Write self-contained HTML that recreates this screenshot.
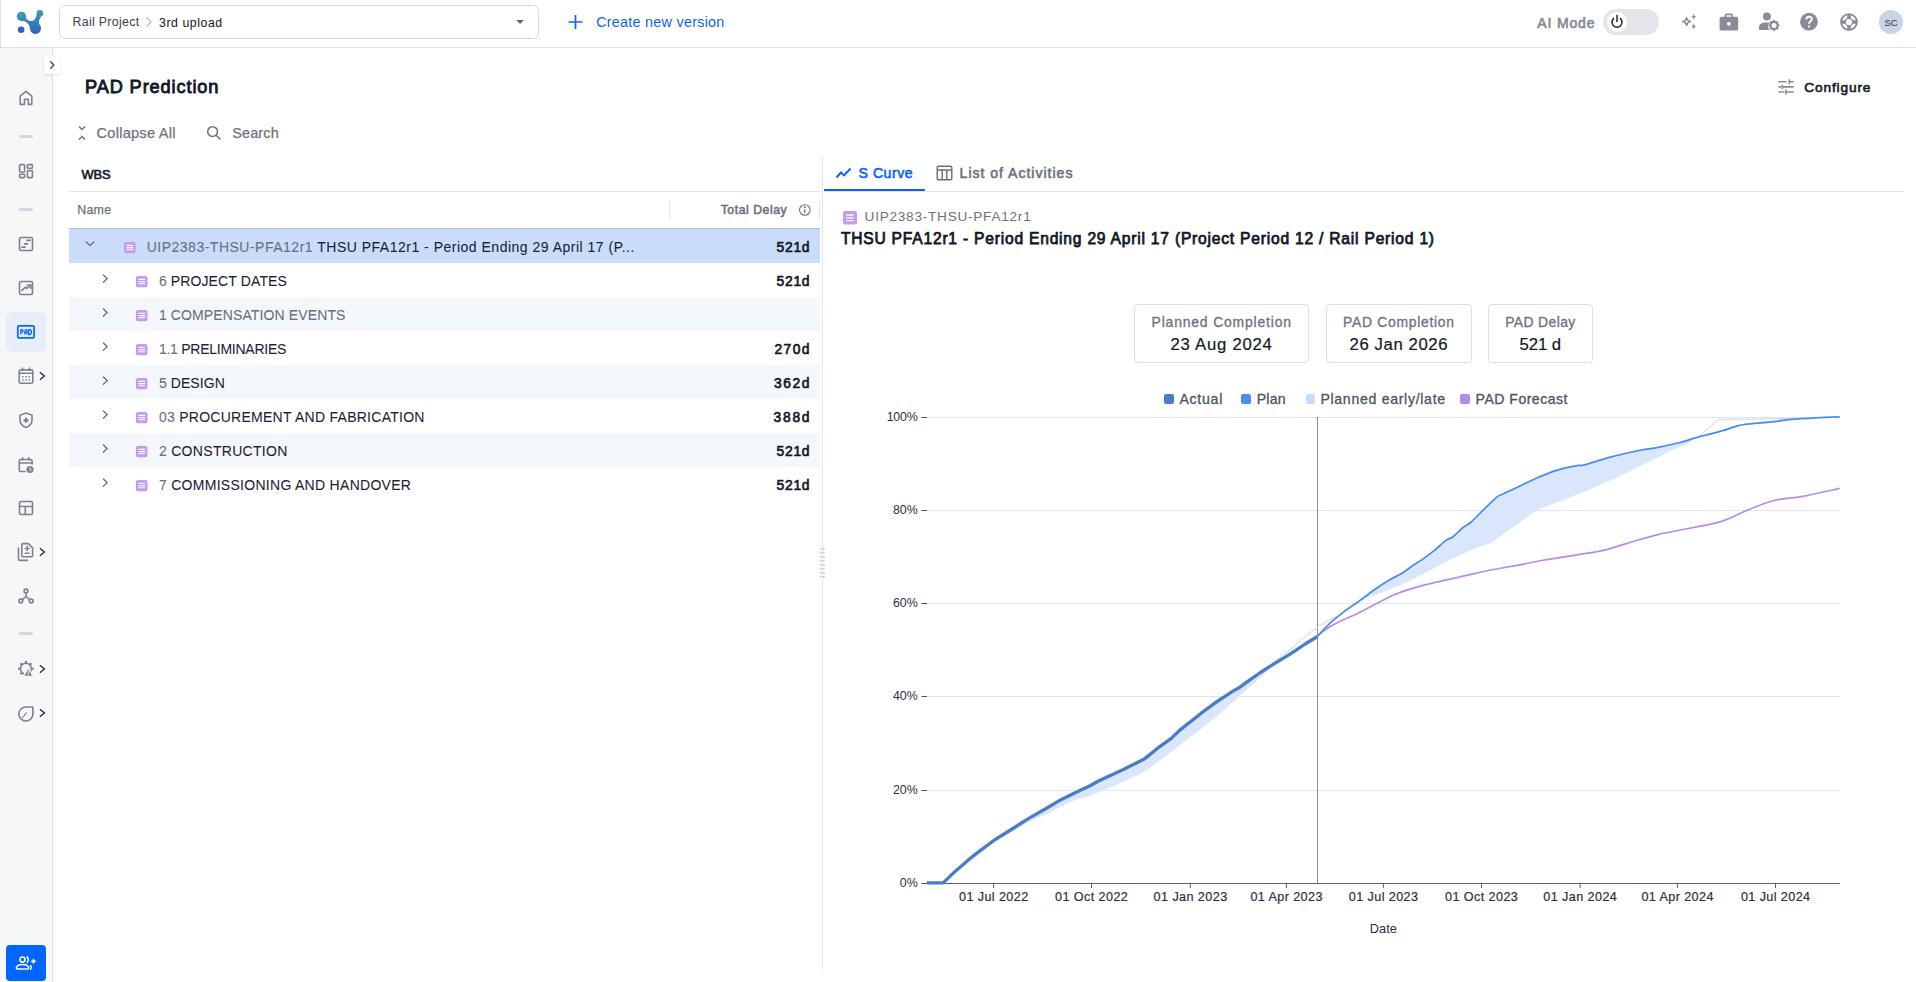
<!DOCTYPE html>
<html><head><meta charset="utf-8">
<style>
*{box-sizing:border-box;margin:0;padding:0}
html,body{width:1916px;height:982px;overflow:hidden;background:#fff;font-family:"Liberation Sans",sans-serif;color:#111827}
.a{position:absolute}
.t{position:absolute;white-space:nowrap;line-height:1}
svg.a{overflow:visible}
</style></head><body>
<div class="a" style="left:0;top:0;width:1916px;height:48px;background:#fff;border-bottom:1px solid #dfe3e8"></div>
<div class="a" style="left:0;top:0;width:1px;height:48px;background:#dfe3e8"></div>
<svg class="a" style="left:0;top:0" width="60" height="48" viewBox="0 0 60 48">
<defs><linearGradient id="lg" gradientUnits="userSpaceOnUse" x1="30" y1="10" x2="33" y2="34"><stop offset="0" stop-color="#3ba2a7"/><stop offset="1" stop-color="#2d63c3"/></linearGradient></defs>
<g fill="url(#lg)">
<circle cx="21.4" cy="16.3" r="4.6"/>
<circle cx="39.9" cy="13.2" r="3.3"/>
<circle cx="35.5" cy="28.4" r="5.5"/>
<path d="M25.6,17.2 C27.2,20.2 29.3,21.2 31.3,21.1 C33.8,21 36,18.6 36.8,14.2 L42.6,14.8 C40.6,17.2 38.7,19.8 38.9,22.5 C39.1,24.8 40.4,26.5 41,28.5 L30,28.5 C29.8,25.8 28,23 25,21.5 C23.2,20.8 20.4,20.9 20.4,20.9 Z"/>
</g>
<circle cx="21.1" cy="29.7" r="3.3" fill="#2e63c1"/>
</svg>
<div class="a" style="left:59px;top:5px;width:480px;height:34px;border:1px solid #d5d9de;border-radius:6px"></div>
<div class="t" style="left:72.5px;top:16.0px;font-size:12.3px;font-weight:400;color:#374151;letter-spacing:0.34px;">Rail Project</div>
<svg class="a" style="left:145px;top:16px" width="8" height="12" viewBox="0 0 8 12"><path d="M1.5,1.5 L6,6 L1.5,10.5" fill="none" stroke="#b8bcc3" stroke-width="1.3"/></svg>
<div class="t" style="left:159.0px;top:16.5px;font-size:12.3px;font-weight:400;color:#111827;letter-spacing:0.56px;">3rd upload</div>
<svg class="a" style="left:514px;top:19px" width="12" height="8" viewBox="0 0 12 8"><path d="M2.2,1.1 L9.9,1.1 L6.05,5 Z" fill="#5f6672"/></svg>
<svg class="a" style="left:568px;top:15px" width="15" height="15" viewBox="0 0 15 15"><path d="M7.5,0 V14 M0.5,7 H14.5" stroke="#0b63f6" stroke-width="1.7"/></svg>
<div class="t" style="left:596.2px;top:15.0px;font-size:14.3px;font-weight:400;color:#0b63f6;letter-spacing:0.29px;">Create new version</div>
<div class="t" style="left:1537.3px;top:15.7px;font-size:14px;font-weight:400;color:#868b95;letter-spacing:0.83px;-webkit-text-stroke:0.65px #868b95">AI Mode</div>
<div class="a" style="left:1603px;top:9px;width:56px;height:26px;border-radius:13px;background:#e3e5ea"></div>
<div class="a" style="left:1607px;top:12px;width:20px;height:20px;border-radius:10px;background:#fff"></div>
<svg class="a" style="left:1607px;top:12px" width="20" height="20" viewBox="0 0 20 20"><path d="M6.6,6.6 A5,5 0 1 0 13.4,6.6" fill="none" stroke="#1f2328" stroke-width="1.5" stroke-linecap="round"/><path d="M10,3.5 V9.5" stroke="#1f2328" stroke-width="1.5" stroke-linecap="round"/></svg>
<svg class="a" style="left:1678px;top:12px" width="20" height="20" viewBox="0 0 20 20">
<path d="M8.6,5.8 Q9.3,9 12.5,9.6 Q9.3,10.2 8.6,13.4 Q7.9,10.2 4.7,9.6 Q7.9,9 8.6,5.8 Z" fill="none" stroke="#878c96" stroke-width="1.5" stroke-linejoin="round"/>
<path d="M15.7,1.8 Q16,4.4 18.2,4.8 Q16,5.2 15.7,7.8 Q15.4,5.2 13.2,4.8 Q15.4,4.4 15.7,1.8Z" fill="#878c96"/>
<path d="M15.7,11.6 Q16,14.2 18.2,14.6 Q16,15 15.7,17.6 Q15.4,15 13.2,14.6 Q15.4,14.2 15.7,11.6Z" fill="#878c96"/>
</svg>
<svg class="a" style="left:1719px;top:12px" width="20" height="20" viewBox="0 0 20 20">
<path d="M6.4,5.5 V3.6 Q6.4,2.3 7.7,2.3 H11.9 Q13.2,2.3 13.2,3.6 V5.5" fill="none" stroke="#878c96" stroke-width="1.7"/>
<rect x="0.6" y="4.8" width="18.6" height="13.8" rx="1.6" fill="#878c96"/>
<circle cx="9.8" cy="11.8" r="1.9" fill="#fff"/>
</svg>
<svg class="a" style="left:1758px;top:11px" width="24" height="22" viewBox="0 0 24 22">
<circle cx="8.9" cy="5.5" r="4" fill="#878c96"/>
<path d="M1,19 V16.5 Q1,11.8 6.5,11.5 H11.5 Q9.8,13.5 10.2,16 Q10.4,18 11.5,19 Z" fill="#878c96"/>
<g transform="translate(16,14.4)"><circle r="3.6" fill="none" stroke="#878c96" stroke-width="2.2"/>
<g stroke="#878c96" stroke-width="2" stroke-linecap="butt"><path d="M0,-5.4 V-3.6 M0,5.4 V3.6 M-5.4,0 H-3.6 M5.4,0 H3.6 M-3.8,-3.8 L-2.6,-2.6 M3.8,3.8 L2.6,2.6 M-3.8,3.8 L-2.6,2.6 M3.8,-3.8 L2.6,-2.6"/></g></g>
</svg>
<svg class="a" style="left:1799px;top:12px" width="20" height="20" viewBox="0 0 20 20">
<circle cx="10" cy="9.7" r="8.9" fill="#878c96"/>
<path d="M7.3,7.6 Q7.3,4.8 10,4.8 Q12.8,4.8 12.8,7.3 Q12.8,8.8 11.2,9.6 Q10,10.2 10,11.8" fill="none" stroke="#fff" stroke-width="1.9"/>
<circle cx="10" cy="14.6" r="1.1" fill="#fff"/>
</svg>
<svg class="a" style="left:1839px;top:12px" width="20" height="20" viewBox="0 0 20 20">
<circle cx="10" cy="10" r="7.9" fill="none" stroke="#878c96" stroke-width="1.9"/>
<circle cx="10" cy="10" r="3.75" fill="none" stroke="#878c96" stroke-width="1.3"/>
<path d="M10,2 V6.5 M10,13.5 V18 M2,10 H6.5 M13.5,10 H18" stroke="#878c96" stroke-width="3.6"/>
</svg>
<div class="a" style="left:1879px;top:10px;width:24px;height:24px;border-radius:12px;background:#c9d5e4"></div>
<div class="t" style="left:1591.0px;width:600px;text-align:center;top:18.0px;font-size:9.5px;font-weight:400;color:#2b3445;">SC</div>
<div class="a" style="left:0;top:48px;width:53px;height:934px;background:#f6f7f9;border-right:1px solid #dcdfe3"></div>
<div class="a" style="left:44px;top:56px;width:16px;height:18px;background:#fff;border-radius:3px;box-shadow:0 1px 3px rgba(0,0,0,0.12)"></div>
<svg class="a" style="left:48px;top:60px" width="8" height="10" viewBox="0 0 8 10"><path d="M2.3,1.3 L5.9,5 L2.3,8.7" fill="none" stroke="#3b4556" stroke-width="1.3"/></svg>
<svg class="a" style="left:16px;top:88px" width="20" height="20" viewBox="0 0 20 20" fill="none" stroke="#7d828c" stroke-width="1.6" stroke-linecap="round" stroke-linejoin="round"><path d="M4.2,16.4 V8.2 L10,3.3 L15.8,8.2 V16.4 H12.3 V11.3 H8.5 V16.4 Z"/></svg>
<div class="a" style="left:19px;top:135px;width:14px;height:3px;border-radius:2px;background:#d3d7dd"></div>
<svg class="a" style="left:16px;top:161px" width="20" height="20" viewBox="0 0 20 20" fill="none" stroke="#7d828c" stroke-width="1.6" stroke-linecap="round" stroke-linejoin="round"><rect x="3.6" y="3.6" width="5" height="7.4" rx="0.8"/><rect x="11.4" y="3.6" width="5" height="3.6" rx="0.8"/><rect x="3.6" y="13.2" width="5" height="3.4" rx="0.8"/><rect x="11.4" y="9.6" width="5" height="7" rx="0.8"/></svg>
<div class="a" style="left:19px;top:208px;width:14px;height:3px;border-radius:2px;background:#d3d7dd"></div>
<svg class="a" style="left:16px;top:234px" width="20" height="20" viewBox="0 0 20 20" fill="none" stroke="#7d828c" stroke-width="1.6" stroke-linecap="round" stroke-linejoin="round"><rect x="3.5" y="3.5" width="13" height="13" rx="1.5"/><path d="M10.8,6.4 H14.3 M8.4,9.9 H11.7 M5.8,13.1 H9.3"/></svg>
<svg class="a" style="left:16px;top:278px" width="20" height="20" viewBox="0 0 20 20" fill="none" stroke="#7d828c" stroke-width="1.6" stroke-linecap="round" stroke-linejoin="round"><rect x="3.5" y="3.5" width="13" height="13" rx="1.5"/><path d="M5.8,12.3 L9.7,9.1 L10.9,10.5 L14.2,7.6 M11.4,7 H14.8 V10.4"/></svg>
<div class="a" style="left:6px;top:312px;width:40px;height:40px;border-radius:6px;background:#e6edf9"></div>
<svg class="a" style="left:16px;top:322px" width="20" height="20" viewBox="0 0 20 20">
<rect x="1.8" y="3.9" width="16.3" height="12" rx="1.4" fill="none" stroke="#0a66fa" stroke-width="1.75"/>
<g fill="none" stroke="#0a66fa" stroke-width="1.3" stroke-linejoin="round"><path d="M4.8,12.5 V7.7 H5.9 Q7.1,7.7 7.1,8.9 Q7.1,10.1 5.9,10.1 H4.8"/><path d="M8.6,12.5 L9.1,8.6 Q9.3,7.7 10,7.7 Q10.9,7.7 11,8.6 V12.5 M8.9,10.6 H11"/><path d="M12.7,7.7 H13.9 Q15.4,7.7 15.4,10.1 Q15.4,12.5 13.9,12.5 H12.7 Z"/></g>
</svg>
<svg class="a" style="left:16px;top:366px" width="20" height="20" viewBox="0 0 20 20" fill="none" stroke="#7d828c" stroke-width="1.6" stroke-linecap="round" stroke-linejoin="round"><rect x="3.2" y="3.9" width="13.6" height="13.3" rx="1.5"/><path d="M3.2,7.2 H16.8 M6.5,2 V4.2 M13.5,2 V4.2"/><g stroke-width="1.4"><path d="M6.6,10.8 H7.1 M9.8,10.8 H10.3 M13,10.8 H13.5 M6.6,14 H7.1 M9.8,14 H10.3 M13,14 H13.5"/></g></svg>
<svg class="a" style="left:38px;top:371px" width="8" height="10" viewBox="0 0 8 10"><path d="M1.9,1.3 L6.4,5 L1.9,8.7" fill="none" stroke="#1f2937" stroke-width="1.3"/></svg>
<svg class="a" style="left:16px;top:410px" width="20" height="20" viewBox="0 0 20 20" fill="none" stroke="#7d828c" stroke-width="1.6" stroke-linecap="round" stroke-linejoin="round"><path d="M10,3 L16,5.2 V10 Q16,15 10,17.5 Q4,15 4,10 V5.2 Z"/><path d="M10,7.8 V12.8 M7.5,10.3 H12.5" stroke-width="2.3" stroke-linecap="butt"/></svg>
<svg class="a" style="left:16px;top:455px" width="20" height="20" viewBox="0 0 20 20" fill="none" stroke="#7d828c" stroke-width="1.6" stroke-linecap="round" stroke-linejoin="round"><path d="M9,16.5 H4.8 Q3.3,16.5 3.3,15 V6 Q3.3,4.5 4.8,4.5 H14.6 Q16.1,4.5 16.1,6 V9"/><path d="M3.3,8 H16.1 M6.6,2.8 V5 M12.8,2.8 V5"/><circle cx="14" cy="14.5" r="3.6" fill="#7d828c" stroke="none"/><path d="M14,12.8 V14.6 L15.2,15.4" stroke="#f6f7f9" stroke-width="1"/></svg>
<svg class="a" style="left:16px;top:498px" width="20" height="20" viewBox="0 0 20 20" fill="none" stroke="#7d828c" stroke-width="1.6" stroke-linecap="round" stroke-linejoin="round"><rect x="3.5" y="3.5" width="13" height="13" rx="1.5"/><path d="M3.5,8.5 H16.5 M9.3,8.5 V16.5"/></svg>
<svg class="a" style="left:16px;top:542px" width="20" height="20" viewBox="0 0 20 20" fill="none" stroke="#7d828c" stroke-width="1.6" stroke-linecap="round" stroke-linejoin="round"><path d="M7,1.6 H12.3 L16.6,5.9 V13.4 Q16.6,14.8 15.2,14.8 H7 Q5.8,14.8 5.8,13.4 V3 Q5.8,1.6 7,1.6 Z"/><path d="M2.5,6 V17.2 Q2.5,18.4 3.7,18.4 H11.6"/><path d="M11.2,4.6 V8.4 M9.3,6.5 H13.1 M9.3,11.3 H13.1"/></svg>
<svg class="a" style="left:38px;top:547px" width="8" height="10" viewBox="0 0 8 10"><path d="M1.9,1.3 L6.4,5 L1.9,8.7" fill="none" stroke="#1f2937" stroke-width="1.3"/></svg>
<svg class="a" style="left:16px;top:586px" width="20" height="20" viewBox="0 0 20 20" fill="none" stroke="#7d828c" stroke-width="1.6" stroke-linecap="round" stroke-linejoin="round"><circle cx="10" cy="5" r="1.9"/><circle cx="4.8" cy="15" r="1.9"/><circle cx="15.2" cy="15" r="1.9"/><path d="M10,7 V10.5 L6.3,13.6 M10,10.5 L13.7,13.6"/></svg>
<div class="a" style="left:19px;top:632px;width:14px;height:3px;border-radius:2px;background:#d3d7dd"></div>
<svg class="a" style="left:16px;top:659px" width="20" height="20" viewBox="0 0 20 20" fill="none" stroke="#7d828c" stroke-width="1.6" stroke-linecap="round" stroke-linejoin="round"><circle cx="9.9" cy="9.7" r="5.5"/><rect x="15.50" y="8.60" width="2.2" height="2.2" transform="rotate(0 16.60 9.70)" fill="#7d828c" stroke="none"/><rect x="13.54" y="13.34" width="2.2" height="2.2" transform="rotate(45 14.64 14.44)" fill="#7d828c" stroke="none"/><rect x="8.80" y="15.30" width="2.2" height="2.2" transform="rotate(90 9.90 16.40)" fill="#7d828c" stroke="none"/><rect x="4.06" y="13.34" width="2.2" height="2.2" transform="rotate(135 5.16 14.44)" fill="#7d828c" stroke="none"/><rect x="2.10" y="8.60" width="2.2" height="2.2" transform="rotate(180 3.20 9.70)" fill="#7d828c" stroke="none"/><rect x="4.06" y="3.86" width="2.2" height="2.2" transform="rotate(225 5.16 4.96)" fill="#7d828c" stroke="none"/><rect x="8.80" y="1.90" width="2.2" height="2.2" transform="rotate(270 9.90 3.00)" fill="#7d828c" stroke="none"/><rect x="13.54" y="3.86" width="2.2" height="2.2" transform="rotate(315 14.64 4.96)" fill="#7d828c" stroke="none"/><path d="M12.3,8.6 L17.2,17.4 H7.4 Z" fill="#7d828c" stroke="#f6f7f9" stroke-width="1.2"/><path d="M12.3,12 V14.3 M12.3,15.6 V15.9" stroke="#f6f7f9" stroke-width="1"/></svg>
<svg class="a" style="left:38px;top:664px" width="8" height="10" viewBox="0 0 8 10"><path d="M1.9,1.3 L6.4,5 L1.9,8.7" fill="none" stroke="#1f2937" stroke-width="1.3"/></svg>
<svg class="a" style="left:16px;top:703px" width="20" height="20" viewBox="0 0 20 20" fill="none" stroke="#7d828c" stroke-width="1.6" stroke-linecap="round" stroke-linejoin="round"><path d="M16.9,4 V11 A7,7 0 1 1 9.9,4 Z"/><path d="M6.2,15 L10.5,9.8" stroke-width="1.1"/></svg>
<svg class="a" style="left:38px;top:708px" width="8" height="10" viewBox="0 0 8 10"><path d="M1.9,1.3 L6.4,5 L1.9,8.7" fill="none" stroke="#1f2937" stroke-width="1.3"/></svg>
<div class="a" style="left:6px;top:945px;width:40px;height:36px;border-radius:4px;background:#0066ff"></div>
<svg class="a" style="left:14px;top:954px" width="24" height="18" viewBox="0 0 24 18">
<circle cx="8.5" cy="5.6" r="2.55" fill="none" stroke="#fff" stroke-width="1.6"/>
<path d="M13.2,2.7 Q15.3,5.65 13.2,8.6 M16.6,11.5 Q18.1,13.4 16.6,15.3" fill="none" stroke="#fff" stroke-width="1.5" stroke-linecap="round"/>
<path d="M3.6,15 Q2.1,15 2.4,13.4 Q3.6,10.5 8.5,10.5 Q13.4,10.5 14.6,13.4 Q14.9,15 13.4,15 Z" fill="none" stroke="#fff" stroke-width="1.6"/>
<path d="M19.5,4.7 Q19.9,6.9 22.1,7.3 Q19.9,7.7 19.5,9.9 Q19.1,7.7 16.9,7.3 Q19.1,6.9 19.5,4.7 Z" fill="#fff" stroke="#fff" stroke-width="0.6" stroke-linejoin="round"/>
</svg>
<div class="t" style="left:85.0px;top:77.8px;font-size:18.2px;font-weight:400;color:#111827;letter-spacing:0.88px;-webkit-text-stroke:0.85px #111827">PAD Prediction</div>
<svg class="a" style="left:1777px;top:78px" width="18" height="18" viewBox="0 0 18 18" stroke="#878c96" stroke-width="1.6">
<path d="M1.4,3.8 H9.6 M12.3,3.8 H16.7 M1.4,8.9 H4 M5.3,8.9 H16.7 M1.4,14 H7.4 M8.9,14 H16.7"/>
<path d="M12.3,1.2 V6.2 M5.3,6.7 V11 M8.9,11.4 V16.5"/>
</svg>
<div class="t" style="left:1804.3px;top:80.7px;font-size:13.7px;font-weight:400;color:#111827;letter-spacing:0.85px;-webkit-text-stroke:0.6px #111827">Configure</div>
<svg class="a" style="left:77px;top:125px" width="10" height="16" viewBox="0 0 10 16" fill="none" stroke="#6b7280" stroke-width="1.4">
<path d="M2,1.5 L5,4.5 L8,1.5 M2,14.5 L5,11.5 L8,14.5"/>
</svg>
<div class="t" style="left:96.5px;top:125.9px;font-size:14.6px;font-weight:400;color:#6b7280;letter-spacing:0.25px;-webkit-text-stroke:0.25px #6b7280">Collapse All</div>
<svg class="a" style="left:206px;top:125px" width="16" height="16" viewBox="0 0 16 16" fill="none" stroke="#6b7280" stroke-width="1.5">
<circle cx="6.6" cy="6.6" r="4.9"/><path d="M10.2,10.2 L14.5,14.5"/>
</svg>
<div class="t" style="left:232.2px;top:126.1px;font-size:14.4px;font-weight:400;color:#6b7280;letter-spacing:0.19px;-webkit-text-stroke:0.25px #6b7280">Search</div>
<div class="t" style="left:81.5px;top:168.5px;font-size:12.9px;font-weight:400;color:#111827;letter-spacing:-0.11px;-webkit-text-stroke:0.6px #111827">WBS</div>
<div class="a" style="left:69px;top:191px;width:751px;height:1px;background:#e1e4e8"></div>
<div class="t" style="left:77.3px;top:203.5px;font-size:12.4px;font-weight:400;color:#6b7280;letter-spacing:0.23px;-webkit-text-stroke:0.25px #6b7280">Name</div>
<div class="a" style="left:669px;top:201px;width:1px;height:18px;background:#e3e5e8"></div>
<div class="a" style="left:819px;top:201px;width:1px;height:18px;background:#e3e5e8"></div>
<div class="t" style="right:1128.7px;top:203.9px;font-size:12.3px;font-weight:400;color:#6b7280;letter-spacing:0.53px;-webkit-text-stroke:0.55px #6b7280">Total Delay</div>
<svg class="a" style="left:798px;top:203px" width="14" height="14" viewBox="0 0 14 14" fill="none" stroke="#6b7280" stroke-width="1.1">
<circle cx="6.8" cy="7" r="5.3"/><path d="M6.8,6.2 V10" stroke-width="1.3"/><circle cx="6.8" cy="4.3" r="0.5" fill="#6b7280"/>
</svg>
<div class="a" style="left:69px;top:228px;width:751px;height:1px;background:#b9bdc3"></div>
<div class="a" style="left:69px;top:229px;width:751px;height:34px;background:#c9dcfa"></div>
<svg class="a" style="left:84px;top:240px" width="12" height="8" viewBox="0 0 12 8"><path d="M1.8,1.6 L6,5.6 L10.2,1.6" fill="none" stroke="#4b5563" stroke-width="1.1"/></svg>
<svg class="a" style="left:124.3px;top:241.6px" width="11.5" height="11.2" viewBox="0 0 11.5 11.2"><rect x="0" y="0" width="11.5" height="11.2" rx="1.8" fill="#c39bf0"/><path d="M2.3,3.4 H9.2 M2.3,5.6 H9.2 M2.3,7.8 H9.2" stroke="#fff" stroke-width="1.15"/></svg>
<div class="t" style="left:146.7px;top:240.4px;font-size:14.0px;color:#1a2233;letter-spacing:0.50px;-webkit-text-stroke:0.05px #1a2233"><span style="color:#6b7280">UIP2383-THSU-PFA12r1</span> THSU PFA12r1 - Period Ending 29 April 17 (P...</div>
<div class="t" style="right:1105.8px;top:240.8px;font-size:13.8px;font-weight:400;color:#111827;letter-spacing:0.73px;-webkit-text-stroke:0.65px #111827">521d</div>
<div class="a" style="left:69px;top:263px;width:751px;height:34px;background:#ffffff"></div>
<svg class="a" style="left:101px;top:273px" width="8" height="12" viewBox="0 0 8 12"><path d="M2,1.6 L6.2,5.6 L2,9.6" fill="none" stroke="#4b5563" stroke-width="1.1"/></svg>
<svg class="a" style="left:136.2px;top:275.6px" width="11.5" height="11.2" viewBox="0 0 11.5 11.2"><rect x="0" y="0" width="11.5" height="11.2" rx="1.8" fill="#c39bf0"/><path d="M2.3,3.4 H9.2 M2.3,5.6 H9.2 M2.3,7.8 H9.2" stroke="#fff" stroke-width="1.15"/></svg>
<div class="t" style="left:158.9px;top:274.4px;font-size:14.0px;color:#1a2233;letter-spacing:0.12px;-webkit-text-stroke:0.05px #1a2233"><span style="color:#6b7280">6</span> PROJECT DATES</div>
<div class="t" style="right:1105.8px;top:274.8px;font-size:13.8px;font-weight:400;color:#111827;letter-spacing:0.73px;-webkit-text-stroke:0.65px #111827">521d</div>
<div class="a" style="left:69px;top:297px;width:751px;height:34px;background:#f4f7fc"></div>
<svg class="a" style="left:101px;top:307px" width="8" height="12" viewBox="0 0 8 12"><path d="M2,1.6 L6.2,5.6 L2,9.6" fill="none" stroke="#4b5563" stroke-width="1.1"/></svg>
<svg class="a" style="left:136.2px;top:309.6px" width="11.5" height="11.2" viewBox="0 0 11.5 11.2"><rect x="0" y="0" width="11.5" height="11.2" rx="1.8" fill="#c39bf0"/><path d="M2.3,3.4 H9.2 M2.3,5.6 H9.2 M2.3,7.8 H9.2" stroke="#fff" stroke-width="1.15"/></svg>
<div class="t" style="left:158.9px;top:308.4px;font-size:14.0px;color:#1a2233;letter-spacing:0.12px;-webkit-text-stroke:0.05px #1a2233"><span style="color:#6b7280">1 COMPENSATION EVENTS</span></div>
<div class="a" style="left:69px;top:331px;width:751px;height:34px;background:#ffffff"></div>
<svg class="a" style="left:101px;top:341px" width="8" height="12" viewBox="0 0 8 12"><path d="M2,1.6 L6.2,5.6 L2,9.6" fill="none" stroke="#4b5563" stroke-width="1.1"/></svg>
<svg class="a" style="left:136.2px;top:343.6px" width="11.5" height="11.2" viewBox="0 0 11.5 11.2"><rect x="0" y="0" width="11.5" height="11.2" rx="1.8" fill="#c39bf0"/><path d="M2.3,3.4 H9.2 M2.3,5.6 H9.2 M2.3,7.8 H9.2" stroke="#fff" stroke-width="1.15"/></svg>
<div class="t" style="left:158.9px;top:342.4px;font-size:14.0px;color:#1a2233;letter-spacing:-0.25px;-webkit-text-stroke:0.05px #1a2233"><span style="color:#6b7280">1.1</span> PRELIMINARIES</div>
<div class="t" style="right:1105.1px;top:342.8px;font-size:13.8px;font-weight:400;color:#111827;letter-spacing:1.43px;-webkit-text-stroke:0.65px #111827">270d</div>
<div class="a" style="left:69px;top:365px;width:751px;height:34px;background:#f4f7fc"></div>
<svg class="a" style="left:101px;top:375px" width="8" height="12" viewBox="0 0 8 12"><path d="M2,1.6 L6.2,5.6 L2,9.6" fill="none" stroke="#4b5563" stroke-width="1.1"/></svg>
<svg class="a" style="left:136.2px;top:377.6px" width="11.5" height="11.2" viewBox="0 0 11.5 11.2"><rect x="0" y="0" width="11.5" height="11.2" rx="1.8" fill="#c39bf0"/><path d="M2.3,3.4 H9.2 M2.3,5.6 H9.2 M2.3,7.8 H9.2" stroke="#fff" stroke-width="1.15"/></svg>
<div class="t" style="left:158.9px;top:376.4px;font-size:14.0px;color:#1a2233;letter-spacing:0.07px;-webkit-text-stroke:0.05px #1a2233"><span style="color:#6b7280">5</span> DESIGN</div>
<div class="t" style="right:1104.9px;top:376.8px;font-size:13.8px;font-weight:400;color:#111827;letter-spacing:1.60px;-webkit-text-stroke:0.65px #111827">362d</div>
<div class="a" style="left:69px;top:399px;width:751px;height:34px;background:#ffffff"></div>
<svg class="a" style="left:101px;top:409px" width="8" height="12" viewBox="0 0 8 12"><path d="M2,1.6 L6.2,5.6 L2,9.6" fill="none" stroke="#4b5563" stroke-width="1.1"/></svg>
<svg class="a" style="left:136.2px;top:411.6px" width="11.5" height="11.2" viewBox="0 0 11.5 11.2"><rect x="0" y="0" width="11.5" height="11.2" rx="1.8" fill="#c39bf0"/><path d="M2.3,3.4 H9.2 M2.3,5.6 H9.2 M2.3,7.8 H9.2" stroke="#fff" stroke-width="1.15"/></svg>
<div class="t" style="left:158.9px;top:410.4px;font-size:14.0px;color:#1a2233;letter-spacing:0.27px;-webkit-text-stroke:0.05px #1a2233"><span style="color:#6b7280">03</span> PROCUREMENT AND FABRICATION</div>
<div class="t" style="right:1104.7px;top:410.8px;font-size:13.8px;font-weight:400;color:#111827;letter-spacing:1.77px;-webkit-text-stroke:0.65px #111827">388d</div>
<div class="a" style="left:69px;top:433px;width:751px;height:34px;background:#f4f7fc"></div>
<svg class="a" style="left:101px;top:443px" width="8" height="12" viewBox="0 0 8 12"><path d="M2,1.6 L6.2,5.6 L2,9.6" fill="none" stroke="#4b5563" stroke-width="1.1"/></svg>
<svg class="a" style="left:136.2px;top:445.6px" width="11.5" height="11.2" viewBox="0 0 11.5 11.2"><rect x="0" y="0" width="11.5" height="11.2" rx="1.8" fill="#c39bf0"/><path d="M2.3,3.4 H9.2 M2.3,5.6 H9.2 M2.3,7.8 H9.2" stroke="#fff" stroke-width="1.15"/></svg>
<div class="t" style="left:158.9px;top:444.4px;font-size:14.0px;color:#1a2233;letter-spacing:0.31px;-webkit-text-stroke:0.05px #1a2233"><span style="color:#6b7280">2</span> CONSTRUCTION</div>
<div class="t" style="right:1105.8px;top:444.8px;font-size:13.8px;font-weight:400;color:#111827;letter-spacing:0.73px;-webkit-text-stroke:0.65px #111827">521d</div>
<div class="a" style="left:69px;top:467px;width:751px;height:34px;background:#ffffff"></div>
<svg class="a" style="left:101px;top:477px" width="8" height="12" viewBox="0 0 8 12"><path d="M2,1.6 L6.2,5.6 L2,9.6" fill="none" stroke="#4b5563" stroke-width="1.1"/></svg>
<svg class="a" style="left:136.2px;top:479.6px" width="11.5" height="11.2" viewBox="0 0 11.5 11.2"><rect x="0" y="0" width="11.5" height="11.2" rx="1.8" fill="#c39bf0"/><path d="M2.3,3.4 H9.2 M2.3,5.6 H9.2 M2.3,7.8 H9.2" stroke="#fff" stroke-width="1.15"/></svg>
<div class="t" style="left:158.9px;top:478.4px;font-size:14.0px;color:#1a2233;letter-spacing:0.29px;-webkit-text-stroke:0.05px #1a2233"><span style="color:#6b7280">7</span> COMMISSIONING AND HANDOVER</div>
<div class="t" style="right:1105.8px;top:478.8px;font-size:13.8px;font-weight:400;color:#111827;letter-spacing:0.73px;-webkit-text-stroke:0.65px #111827">521d</div>
<div class="a" style="left:822px;top:156px;width:1px;height:813px;background:#e3e5e9"></div>
<svg class="a" style="left:820px;top:548px" width="6" height="32" viewBox="0 0 6 32" fill="#c4c7cc"><rect x="0" y="0" width="1.6" height="1.6"/><rect x="3" y="0" width="1.6" height="1.6"/><rect x="0" y="4" width="1.6" height="1.6"/><rect x="3" y="4" width="1.6" height="1.6"/><rect x="0" y="8" width="1.6" height="1.6"/><rect x="3" y="8" width="1.6" height="1.6"/><rect x="0" y="12" width="1.6" height="1.6"/><rect x="3" y="12" width="1.6" height="1.6"/><rect x="0" y="16" width="1.6" height="1.6"/><rect x="3" y="16" width="1.6" height="1.6"/><rect x="0" y="20" width="1.6" height="1.6"/><rect x="3" y="20" width="1.6" height="1.6"/><rect x="0" y="24" width="1.6" height="1.6"/><rect x="3" y="24" width="1.6" height="1.6"/><rect x="0" y="28" width="1.6" height="1.6"/><rect x="3" y="28" width="1.6" height="1.6"/></svg>
<svg class="a" style="left:835px;top:166px" width="17" height="13" viewBox="0 0 17 13"><path d="M1.5,11.5 L6,6.5 L9,9.5 L15.5,2.5" fill="none" stroke="#0b63f6" stroke-width="1.9" stroke-linejoin="miter"/></svg>
<div class="t" style="left:858.5px;top:166.1px;font-size:14.1px;font-weight:400;color:#0b63f6;letter-spacing:0.53px;-webkit-text-stroke:0.6px #0b63f6">S Curve</div>
<svg class="a" style="left:936px;top:165px" width="17" height="16" viewBox="0 0 17 16" fill="none" stroke="#6b7075" stroke-width="1.4"><rect x="1.2" y="1.2" width="14.6" height="13.6" rx="1.3"/><path d="M1.2,5 H15.8 M6.2,5 V14.8 M10.8,5 V14.8"/></svg>
<div class="t" style="left:959.6px;top:166.1px;font-size:14.1px;font-weight:400;color:#6b7280;letter-spacing:0.97px;-webkit-text-stroke:0.6px #6b7280">List of Activities</div>
<div class="a" style="left:824px;top:191px;width:1080px;height:1px;background:#e1e4e8"></div>
<div class="a" style="left:824px;top:189px;width:101px;height:2px;background:#0b63f6"></div>
<svg class="a" style="left:843px;top:211px" width="14" height="13.5" viewBox="0 0 14 13.5"><rect x="0" y="0" width="14" height="13.5" rx="2" fill="#c39bf0"/><path d="M3.3,4 H10.7 M3.3,6.8 H10.7 M3.3,9.6 H10.7" stroke="#fff" stroke-width="1.3"/></svg>
<div class="t" style="left:864.6px;top:210.2px;font-size:13.6px;font-weight:400;color:#6b7280;letter-spacing:0.75px;">UIP2383-THSU-PFA12r1</div>
<div class="t" style="left:840.9px;top:230.5px;font-size:15.6px;font-weight:400;color:#111827;letter-spacing:0.79px;-webkit-text-stroke:0.75px #111827">THSU PFA12r1 - Period Ending 29 April 17 (Project Period 12 / Rail Period 1)</div>
<div class="a" style="left:1134px;top:304px;width:174.5px;height:58.5px;border:1px solid #dcdfe4;border-radius:4px"></div>
<div class="t" style="left:921.7px;width:600px;text-align:center;top:315.8px;font-size:13.9px;font-weight:400;color:#6b7280;letter-spacing:0.84px;-webkit-text-stroke:0.3px #6b7280">Planned Completion</div>
<div class="t" style="left:921.6px;width:600px;text-align:center;top:336.8px;font-size:16.7px;font-weight:400;color:#111827;letter-spacing:0.75px;-webkit-text-stroke:0.2px #111827">23 Aug 2024</div>
<div class="a" style="left:1325.5px;top:304px;width:146px;height:58.5px;border:1px solid #dcdfe4;border-radius:4px"></div>
<div class="t" style="left:1098.9px;width:600px;text-align:center;top:315.8px;font-size:13.9px;font-weight:400;color:#6b7280;letter-spacing:0.71px;-webkit-text-stroke:0.3px #6b7280">PAD Completion</div>
<div class="t" style="left:1098.8px;width:600px;text-align:center;top:336.8px;font-size:16.7px;font-weight:400;color:#111827;letter-spacing:0.60px;-webkit-text-stroke:0.2px #111827">26 Jan 2026</div>
<div class="a" style="left:1488px;top:304px;width:104.5px;height:58.5px;border:1px solid #dcdfe4;border-radius:4px"></div>
<div class="t" style="left:1240.4px;width:600px;text-align:center;top:315.8px;font-size:13.9px;font-weight:400;color:#6b7280;letter-spacing:0.40px;-webkit-text-stroke:0.3px #6b7280">PAD Delay</div>
<div class="t" style="left:1240.2px;width:600px;text-align:center;top:336.8px;font-size:16.7px;font-weight:400;color:#111827;letter-spacing:-0.06px;-webkit-text-stroke:0.2px #111827">521 d</div>
<div class="a" style="left:1163.8px;top:394.2px;width:9.8px;height:9.8px;border-radius:2px;background:#4a7bc8"></div>
<div class="t" style="left:1179.4px;top:392.2px;font-size:14.1px;font-weight:400;color:#4b5563;letter-spacing:0.74px;-webkit-text-stroke:0.3px #4b5563">Actual</div>
<div class="a" style="left:1241.4px;top:394.2px;width:9.8px;height:9.8px;border-radius:2px;background:#4d8df5"></div>
<div class="t" style="left:1256.8px;top:392.2px;font-size:14.1px;font-weight:400;color:#4b5563;letter-spacing:0.17px;-webkit-text-stroke:0.3px #4b5563">Plan</div>
<div class="a" style="left:1305.5px;top:394.2px;width:9.8px;height:9.8px;border-radius:2px;background:#c9dbf9"></div>
<div class="t" style="left:1320.4px;top:392.2px;font-size:14.1px;font-weight:400;color:#4b5563;letter-spacing:0.70px;-webkit-text-stroke:0.3px #4b5563">Planned early/late</div>
<div class="a" style="left:1460.4px;top:394.2px;width:9.8px;height:9.8px;border-radius:2px;background:#b58ce8"></div>
<div class="t" style="left:1475.6px;top:392.2px;font-size:14.1px;font-weight:400;color:#4b5563;letter-spacing:0.47px;-webkit-text-stroke:0.3px #4b5563">PAD Forecast</div>
<svg class="a" style="left:0;top:0" width="1916" height="982" viewBox="0 0 1916 982"><path d="M927,417.5 H1840" stroke="#dde5f0" stroke-width="1"/><path d="M927,510.5 H1840" stroke="#dde5f0" stroke-width="1"/><path d="M927,603.5 H1840" stroke="#dde5f0" stroke-width="1"/><path d="M927,696.5 H1840" stroke="#dde5f0" stroke-width="1"/><path d="M927,790.5 H1840" stroke="#dde5f0" stroke-width="1"/><path d="M921.5,417.5 H927" stroke="#4b5563" stroke-width="1"/><path d="M921.5,510.5 H927" stroke="#4b5563" stroke-width="1"/><path d="M921.5,603.5 H927" stroke="#4b5563" stroke-width="1"/><path d="M921.5,696.5 H927" stroke="#4b5563" stroke-width="1"/><path d="M921.5,790.5 H927" stroke="#4b5563" stroke-width="1"/><path d="M921.5,883.5 H927" stroke="#4b5563" stroke-width="1"/><path d="M1317.5,417 V883" stroke="#8b9098" stroke-width="1"/><path d="M927,883.5 H1840" stroke="#5b6170" stroke-width="1"/><path d="M993.6,883 V888" stroke="#5b6170" stroke-width="1"/><path d="M1091.5,883 V888" stroke="#5b6170" stroke-width="1"/><path d="M1190.4,883 V888" stroke="#5b6170" stroke-width="1"/><path d="M1286.4,883 V888" stroke="#5b6170" stroke-width="1"/><path d="M1383.4,883 V888" stroke="#5b6170" stroke-width="1"/><path d="M1481.5,883 V888" stroke="#5b6170" stroke-width="1"/><path d="M1580.1,883 V888" stroke="#5b6170" stroke-width="1"/><path d="M1677.4,883 V888" stroke="#5b6170" stroke-width="1"/><path d="M1775.5,883 V888" stroke="#5b6170" stroke-width="1"/><path d="M993.5,840.7 L1008.1,831.5 L1027.9,818.9 L1046.5,808.3 L1061.0,799.7 L1075.6,792.4 L1090.0,785.8 L1098.5,781.0 L1122.8,769.8 L1144.2,759.1 L1157.0,748.7 L1171.3,738.4 L1179.8,730.1 L1201.2,713.2 L1216.9,701.6 L1232.6,691.4 L1240.0,687.1 L1250.2,679.6 L1260.4,672.5 L1275.6,662.8 L1275.6,662.8 L1262.9,675.5 L1248.6,687.9 L1240.0,695.6 L1222.6,711.3 L1208.3,723.4 L1188.4,738.4 L1168.4,754.1 L1144.2,771.9 L1122.8,781.9 L1104.2,790.0 L1090.0,795.7 L1075.6,799.7 L1062.3,805.7 L1046.5,814.3 L1027.9,822.2 L1009.4,833.5 L993.5,841.0 Z" fill="#d9e6fb" stroke="none"/><path d="M1360.0,600.5 L1374.3,589.8 L1388.5,580.5 L1402.8,572.7 L1412.8,565.5 L1422.7,559.1 L1434.2,550.6 L1445.6,540.6 L1452.7,537.0 L1462.7,527.8 L1471.2,522.0 L1482.6,510.6 L1496.9,497.1 L1504.0,493.5 L1520.0,486.0 L1535.7,478.5 L1555.7,470.6 L1577.0,465.6 L1584.2,464.9 L1611.3,456.8 L1641.2,450.0 L1655.5,447.8 L1680.0,442.5 L1694.3,438.2 L1700.0,435.5 L1700.0,435.5 L1685.7,445.0 L1680.0,446.5 L1662.6,454.9 L1641.2,465.6 L1619.8,476.3 L1588.4,489.9 L1555.7,502.7 L1537.1,509.8 L1520.0,522.3 L1491.2,542.7 L1471.2,549.9 L1448.4,560.6 L1428.4,571.2 L1399.9,585.5 L1358.0,601.5 Z" fill="#d9e6fb" stroke="none"/><path d="M1262.0,674.0 C1264.1,671.9 1269.9,665.5 1274.6,661.5 C1279.3,657.5 1285.6,653.6 1290.0,650.0 C1294.4,646.4 1296.5,643.7 1301.1,639.9 C1305.7,636.1 1312.8,630.4 1317.4,627.2 C1322.0,624.0 1325.2,622.4 1328.6,620.5 C1332.0,618.6 1335.2,617.5 1337.8,616.0 C1340.4,614.5 1343.0,612.2 1344.0,611.5" fill="none" stroke="#cfdff8" stroke-width="1.1"/><path d="M1700.0,435.5 L1718.5,419.3 L1760.0,419.0 L1794.0,418.3" fill="none" stroke="#c6d8f7" stroke-width="1"/><path d="M926.9,882.9 L943.2,882.9 L955.1,871.4 L968.4,859.9 L977.6,852.6 L993.5,840.7 L1008.1,831.5 L1027.9,818.9 L1046.5,808.3 L1061.0,799.7 L1075.6,792.4 L1090.0,785.8 L1098.5,781.0 L1122.8,769.8 L1144.2,759.1 L1157.0,748.7 L1171.3,738.4 L1179.8,730.1 L1201.2,713.2 L1216.9,701.6 L1232.6,691.4 L1240.0,687.1 L1250.2,679.6 L1260.4,672.5 L1275.6,662.8 L1290.9,653.6 L1305.2,644.0 L1317.4,636.5" fill="none" stroke="#4a7bc8" stroke-width="3.3" stroke-linejoin="round"/><path d="M1317.4,636.2 C1318.9,635.0 1322.5,631.3 1326.6,628.7 C1330.7,626.1 1336.5,623.1 1341.8,620.5 C1347.0,617.9 1352.0,616.2 1358.1,613.2 C1364.2,610.2 1372.5,605.7 1378.5,602.6 C1384.5,599.5 1389.0,597.0 1394.2,594.8 C1399.4,592.5 1403.7,591.0 1409.9,589.1 C1416.1,587.2 1423.0,585.4 1431.3,583.4 C1439.6,581.4 1450.3,579.1 1459.8,577.0 C1469.3,574.9 1478.3,572.5 1488.3,570.5 C1498.3,568.5 1510.7,566.5 1520.0,564.8 C1529.3,563.0 1534.7,561.7 1544.2,560.0 C1553.7,558.3 1566.8,556.5 1577.0,554.8 C1587.2,553.1 1596.1,552.1 1605.6,549.8 C1615.1,547.5 1625.5,543.7 1634.1,541.2 C1642.6,538.7 1649.2,536.7 1656.9,534.8 C1664.6,532.9 1669.5,532.1 1680.0,530.0 C1690.5,527.9 1708.5,525.3 1719.9,521.9 C1731.3,518.5 1739.4,513.4 1748.4,509.8 C1757.4,506.2 1765.1,502.8 1774.1,500.5 C1783.1,498.2 1791.7,498.3 1802.6,496.3 C1813.5,494.3 1833.5,489.7 1839.7,488.4" fill="none" stroke="#b68bea" stroke-width="1.7" stroke-linejoin="round"/><path d="M1317.4,636.2 C1319.4,634.1 1325.2,627.7 1329.6,623.6 C1334.0,619.5 1338.8,615.8 1343.9,611.9 C1349.0,608.0 1354.9,604.2 1360.0,600.5 C1365.1,596.8 1369.5,593.1 1374.3,589.8 C1379.0,586.5 1383.8,583.4 1388.5,580.5 C1393.2,577.6 1398.8,575.2 1402.8,572.7 C1406.8,570.2 1409.5,567.8 1412.8,565.5 C1416.1,563.2 1419.1,561.6 1422.7,559.1 C1426.3,556.6 1430.4,553.7 1434.2,550.6 C1438.0,547.5 1442.5,542.9 1445.6,540.6 C1448.7,538.3 1449.8,539.1 1452.7,537.0 C1455.6,534.9 1459.6,530.3 1462.7,527.8 C1465.8,525.3 1467.9,524.9 1471.2,522.0 C1474.5,519.1 1478.3,514.8 1482.6,510.6 C1486.9,506.5 1493.3,500.0 1496.9,497.1 C1500.5,494.2 1500.2,495.4 1504.0,493.5 C1507.8,491.6 1514.7,488.5 1520.0,486.0 C1525.3,483.5 1529.8,481.1 1535.7,478.5 C1541.7,475.9 1548.8,472.8 1555.7,470.6 C1562.6,468.5 1572.2,466.6 1577.0,465.6 C1581.8,464.7 1578.5,466.4 1584.2,464.9 C1589.9,463.4 1601.8,459.3 1611.3,456.8 C1620.8,454.3 1633.8,451.5 1641.2,450.0 C1648.6,448.5 1649.0,449.1 1655.5,447.8 C1662.0,446.6 1673.5,444.1 1680.0,442.5 C1686.5,440.9 1687.2,440.2 1694.3,438.2 C1701.4,436.2 1716.1,432.6 1722.8,430.7 C1729.5,428.8 1730.6,427.8 1734.2,426.8 C1737.8,425.8 1737.6,425.4 1744.2,424.5 C1750.8,423.6 1766.3,422.6 1774.1,421.7 C1781.9,420.8 1784.3,419.9 1791.2,419.3 C1798.1,418.7 1807.4,418.2 1815.5,417.8 C1823.6,417.4 1835.7,417.0 1839.7,416.8" fill="none" stroke="#4a8af4" stroke-width="1.75" stroke-linejoin="round"/></svg>
<div class="t" style="right:998.5px;top:410.6px;font-size:12.4px;font-weight:400;color:#2b3040;letter-spacing:-0.21px;">100%</div>
<div class="t" style="right:998.3px;top:503.6px;font-size:12.4px;font-weight:400;color:#2b3040;">80%</div>
<div class="t" style="right:998.3px;top:596.6px;font-size:12.4px;font-weight:400;color:#2b3040;">60%</div>
<div class="t" style="right:998.3px;top:689.6px;font-size:12.4px;font-weight:400;color:#2b3040;">40%</div>
<div class="t" style="right:998.3px;top:783.6px;font-size:12.4px;font-weight:400;color:#2b3040;">20%</div>
<div class="t" style="right:998.3px;top:876.6px;font-size:12.4px;font-weight:400;color:#2b3040;">0%</div>
<div class="t" style="left:693.8px;width:600px;text-align:center;top:891.1px;font-size:12.6px;font-weight:400;color:#2b3040;letter-spacing:0.40px;-webkit-text-stroke:0.2px #2b3040">01 Jul 2022</div>
<div class="t" style="left:791.7px;width:600px;text-align:center;top:891.1px;font-size:12.6px;font-weight:400;color:#2b3040;letter-spacing:0.42px;-webkit-text-stroke:0.2px #2b3040">01 Oct 2022</div>
<div class="t" style="left:890.6px;width:600px;text-align:center;top:891.1px;font-size:12.6px;font-weight:400;color:#2b3040;letter-spacing:0.42px;-webkit-text-stroke:0.2px #2b3040">01 Jan 2023</div>
<div class="t" style="left:986.6px;width:600px;text-align:center;top:891.1px;font-size:12.6px;font-weight:400;color:#2b3040;letter-spacing:0.41px;-webkit-text-stroke:0.2px #2b3040">01 Apr 2023</div>
<div class="t" style="left:1083.6px;width:600px;text-align:center;top:891.1px;font-size:12.6px;font-weight:400;color:#2b3040;letter-spacing:0.40px;-webkit-text-stroke:0.2px #2b3040">01 Jul 2023</div>
<div class="t" style="left:1181.7px;width:600px;text-align:center;top:891.1px;font-size:12.6px;font-weight:400;color:#2b3040;letter-spacing:0.42px;-webkit-text-stroke:0.2px #2b3040">01 Oct 2023</div>
<div class="t" style="left:1280.3px;width:600px;text-align:center;top:891.1px;font-size:12.6px;font-weight:400;color:#2b3040;letter-spacing:0.42px;-webkit-text-stroke:0.2px #2b3040">01 Jan 2024</div>
<div class="t" style="left:1377.6px;width:600px;text-align:center;top:891.1px;font-size:12.6px;font-weight:400;color:#2b3040;letter-spacing:0.41px;-webkit-text-stroke:0.2px #2b3040">01 Apr 2024</div>
<div class="t" style="left:1475.7px;width:600px;text-align:center;top:891.1px;font-size:12.6px;font-weight:400;color:#2b3040;letter-spacing:0.40px;-webkit-text-stroke:0.2px #2b3040">01 Jul 2024</div>
<div class="t" style="left:1083.3px;width:600px;text-align:center;top:922.7px;font-size:12.8px;font-weight:400;color:#2b3040;letter-spacing:-0.04px;">Date</div>
</body></html>
